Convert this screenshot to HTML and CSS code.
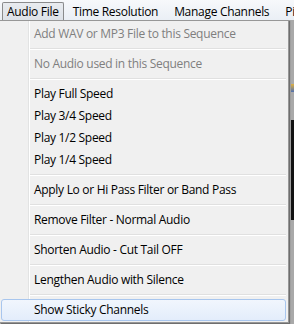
FILE: index.html
```html
<!DOCTYPE html>
<html lang="en">
<head>
    <meta charset="UTF-8">
    <title>Audio File menu</title>
    <link rel="stylesheet" href="styles.css">
</head>
<body>
    <div class="menubar">
        <div class="menubar-item open">Audio File</div>
        <div class="menubar-item">Time Resolution</div>
        <div class="menubar-item">Manage Channels</div>
        <div class="menubar-item">Pixels</div>
    </div>
    <div class="workspace">
        <div class="app-area">
            <div class="app-icon"></div>
            <div class="app-dark"></div>
        </div>

        <div class="dropdown">
            <div class="menu-item disabled">Add WAV or MP3 File to this Sequence</div>
            <div class="separator"></div>
            <div class="menu-item disabled">No Audio used in this Sequence</div>
            <div class="separator"></div>
            <div class="menu-item">Play Full Speed</div>
            <div class="menu-item">Play 3/4 Speed</div>
            <div class="menu-item">Play 1/2 Speed</div>
            <div class="menu-item">Play 1/4 Speed</div>
            <div class="separator"></div>
            <div class="menu-item">Apply Lo or Hi Pass Filter or Band Pass</div>
            <div class="separator"></div>
            <div class="menu-item">Remove Filter - Normal Audio</div>
            <div class="separator"></div>
            <div class="menu-item">Shorten Audio - Cut Tail OFF</div>
            <div class="separator"></div>
            <div class="menu-item">Lengthen Audio with Silence</div>
            <div class="separator"></div>
            <div class="menu-item hover">Show Sticky Channels</div>
        </div>
    </div>
</body>
</html>
```

FILE: styles.css
```css
body {
    margin: 0;
    width: 294px;
    height: 324px;
    overflow: hidden;
    font-family: 'Open Sans', 'Noto Sans', sans-serif;
    font-size: 12px;
    letter-spacing: -0.3px;
    color: #000;
    background-color: #f0f0f0;
}
.menubar {
    display: flex;
    height: 20px;
    padding-left: 2px;
    background: linear-gradient(#f7f9fb, #eaeff5);
    white-space: nowrap;
    overflow: hidden;
}
.menubar-item {
    padding: 0 7px;
    line-height: 18px;
    margin-top: 2px;
    height: 17px;
    border: 1px solid transparent;
    border-bottom: none;
}
.menubar-item.open {
    padding: 0 4px;
    margin-right: 1px;
    border-color: #8a8b8c;
    border-radius: 2px 2px 0 0;
    background: linear-gradient(#e8ebef, #dde2e8);
}
.workspace {
    position: relative;
    height: 304px;
}
.app-area {
    display: flex;
    flex-direction: column;
    align-items: flex-end;
    height: 100%;
    background-color: #a9a9a9;
}
.app-icon {
    width: 3px;
    height: 8px;
    margin-top: 64px;
    background: linear-gradient(#e0b040, #5070b0);
}
.app-dark {
    width: 3px;
    height: 100px;
    margin-top: 28px;
    background-color: #111;
}
.dropdown {
    position: absolute;
    top: 0;
    left: 0;
    width: 288px;
    padding: 2px 0 1px 0;
    border: 1px solid #979797;
    border-left: none;
    background-color: #f0f0f0;
    background-image: linear-gradient(90deg, transparent 28px, #e2e3e3 28px, #e2e3e3 29px, #fff 29px, #fff 30px, transparent 30px);
    box-shadow: 1px 1px 1px rgba(0, 0, 0, 0.35);
}
.menu-item {
    height: 20px;
    line-height: 20px;
    padding-left: 32px;
    margin: 0 2px 0 1px;
    border: 1px solid transparent;
    border-radius: 3px;
    white-space: nowrap;
}
.menu-item.disabled {
    color: #7f7f7f;
}
.menu-item.hover {
    border-color: #a8c6ee;
    background: linear-gradient(#f1f6fd, #e3edfb);
}
.separator {
    height: 8px;
    margin-left: 30px;
    margin-right: 2px;
    background-image: linear-gradient(transparent 3px, #e0e0e0 3px, #e0e0e0 4px, #fff 4px, #fff 5px, transparent 5px);
}
```
